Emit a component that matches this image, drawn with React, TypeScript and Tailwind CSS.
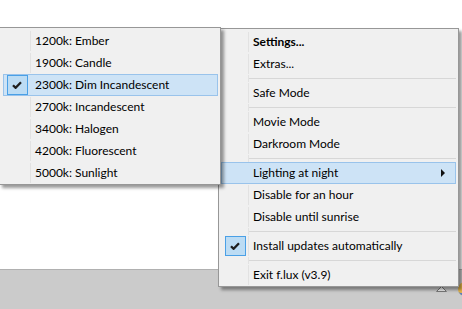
import React from "react";

type Item =
  | { kind: "item"; label: string; bold?: boolean; checked?: boolean; hi?: boolean; arrow?: boolean }
  | { kind: "sep" };

const Check = () => (
  <svg width="10" height="8" viewBox="0 0 10 8">
    <path d="M1 4.2 L3.6 6.8 L9 1.2" fill="none" stroke="#1e1e1e" strokeWidth="2.3" />
  </svg>
);

const Arrow = () => (
  <svg width="4" height="8" viewBox="0 0 4 8">
    <path d="M0 0 L4 4 L0 8 Z" fill="#111" />
  </svg>
);

function Row({ item, gutter }: { item: Extract<Item, { kind: "item" }>; gutter: number }) {
  const hi = item.hi;
  return (
    <div
      className={
        "flex h-[22px] items-stretch border " +
        (hi ? "border-[#99c3eb] bg-[#cde3f6]" : "border-transparent")
      }
    >
      <div className="flex items-center justify-center" style={{ width: gutter - 1 }}>
        {item.checked ? (
          <div className="flex h-[20px] w-[21px] items-center justify-center border border-[#4aa0e6] bg-[#bcdcf4]">
            <Check />
          </div>
        ) : null}
      </div>
      <div className={"w-px " + (hi ? "bg-transparent" : "bg-[#e2e2e2]")} />
      <div
        className={
          "flex flex-1 items-center pl-[4px] pr-[10px] text-[12px] text-[#000] " +
          (item.bold ? "font-bold" : "")
        }
      >
        <span className="flex-1 whitespace-nowrap">{item.label}</span>
        {item.arrow ? <Arrow /> : null}
      </div>
    </div>
  );
}

function Sep({ gutter }: { gutter: number }) {
  return (
    <div className="flex h-[7px]">
      <div style={{ width: gutter }} />
      <div className="w-px bg-[#e2e2e2]" />
      <div className="flex flex-1 items-center pl-[0px]">
        <div className="h-px w-full bg-[#d7d7d7]" />
      </div>
    </div>
  );
}

const mainItems: Item[] = [
  { kind: "item", label: "Settings...", bold: true },
  { kind: "item", label: "Extras..." },
  { kind: "sep" },
  { kind: "item", label: "Safe Mode" },
  { kind: "sep" },
  { kind: "item", label: "Movie Mode" },
  { kind: "item", label: "Darkroom Mode" },
  { kind: "sep" },
  { kind: "item", label: "Lighting at night", hi: true, arrow: true },
  { kind: "item", label: "Disable for an hour" },
  { kind: "item", label: "Disable until sunrise" },
  { kind: "sep" },
  { kind: "item", label: "Install updates automatically", checked: true },
  { kind: "sep" },
  { kind: "item", label: "Exit f.lux (v3.9)" },
];

const subItems: Item[] = [
  { kind: "item", label: "1200k: Ember" },
  { kind: "item", label: "1900k: Candle" },
  { kind: "item", label: "2300k: Dim Incandescent", checked: true, hi: true },
  { kind: "item", label: "2700k: Incandescent" },
  { kind: "item", label: "3400k: Halogen" },
  { kind: "item", label: "4200k: Fluorescent" },
  { kind: "item", label: "5000k: Sunlight" },
];

export default function App() {
  return (
    <div
      className="relative h-[309px] w-[462px] overflow-hidden bg-white"
      style={{ fontFamily: 'Lato, "Noto Sans", Arial, sans-serif' }}
    >
      <div className="flex h-full flex-col">
        <div className="h-[269px] bg-white" />
        <div className="relative flex-1 border-t border-[#b0b0b0] bg-[#cbcbcb]">
          <svg className="absolute left-[436px] top-[16px]" width="11" height="6" viewBox="0 0 11 6">
            <path d="M0.5 5.5 L5.5 0.5 L10.5 5.5 Z" fill="#f4f4f4" stroke="#7a7a7a" />
          </svg>
          <div className="absolute left-[458px] top-[12px] h-[14px] w-[14px] rounded-full bg-[#e8b84a] shadow-[inset_-3px_-3px_0_#5b7fbf]" />
        </div>
      </div>

      {/* main menu */}
      <div className="absolute left-[218px] top-[28px] w-[241px] border border-[#979797] bg-[#f0f0f0] px-[2px] pt-[2px] shadow-[3px_3px_3px_rgba(0,0,0,0.4)]">
        {mainItems.map((it, i) =>
          it.kind === "sep" ? <Sep key={i} gutter={27} /> : <Row key={i} item={it} gutter={27} />
        )}
      </div>

      {/* submenu */}
      <div className="absolute left-[-1px] top-[27px] w-[222px] border border-[#979797] bg-[#f0f0f0] pl-[3px] pr-[2px] pt-[2px] shadow-[3px_3px_3px_rgba(0,0,0,0.4)]">
        {subItems.map((it, i) =>
          it.kind === "sep" ? <Sep key={i} gutter={27} /> : <Row key={i} item={it} gutter={27} />
        )}
      </div>
    </div>
  );
}
